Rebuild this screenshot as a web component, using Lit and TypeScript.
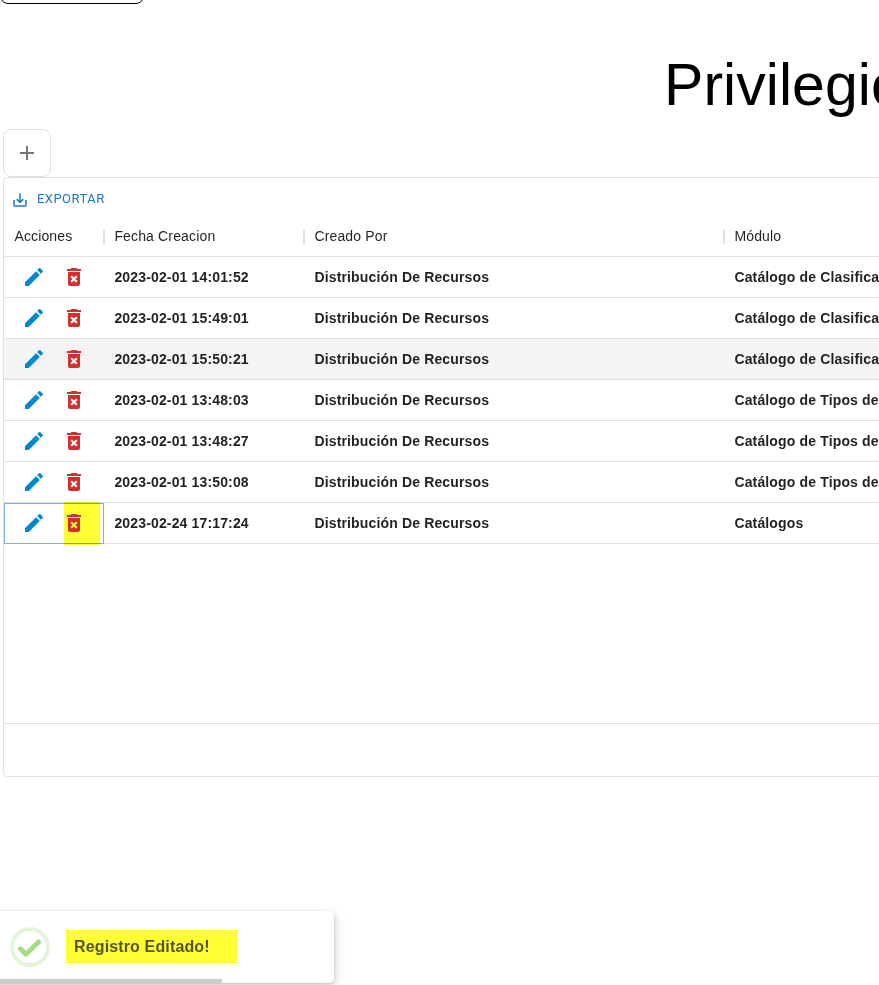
import { LitElement, html, css, svg } from "lit";
import { customElement } from "lit/decorators.js";
import { classMap } from "lit/directives/class-map.js";

const icon = (name: string, d: string) => html`
  <svg class="icon ${name}" viewBox="0 0 24 24">${svg`<path d=${d}></path>`}</svg>
`;

const ADD = "M19 13h-6v6h-2v-6H5v-2h6V5h2v6h6v2z";
const SAVE =
  "M19 12v7H5v-7H3v7c0 1.1.9 2 2 2h14c1.1 0 2-.9 2-2v-7h-2zm-6 .67l2.59-2.58L17 11.5l-5 5-5-5 1.41-1.41L11 12.67V3h2z";
const EDIT =
  "M3 17.25V21h3.75L17.81 9.94l-3.75-3.75L3 17.25zM20.71 7.04c.39-.39.39-1.02 0-1.41l-2.34-2.34a.9959.9959 0 0 0-1.41 0l-1.83 1.83 3.75 3.75 1.83-1.83z";
const DELETE =
  "M6 19c0 1.1.9 2 2 2h8c1.1 0 2-.9 2-2V7H6v12zm2.46-7.12l1.41-1.41L12 12.59l2.12-2.12 1.41 1.41L13.41 14l2.12 2.12-1.41 1.41L12 15.41l-2.12 2.12-1.41-1.41L10.59 14l-2.13-2.12zM15.5 4l-1-1h-5l-1 1H5v2h14V4z";

const ROWS = [
  ["2023-02-01 14:01:52", "Catálogo de Clasificación"],
  ["2023-02-01 15:49:01", "Catálogo de Clasificación"],
  ["2023-02-01 15:50:21", "Catálogo de Clasificación"],
  ["2023-02-01 13:48:03", "Catálogo de Tipos de"],
  ["2023-02-01 13:48:27", "Catálogo de Tipos de"],
  ["2023-02-01 13:50:08", "Catálogo de Tipos de"],
  ["2023-02-24 17:17:24", "Catálogos"],
];
const HOVERED = 2;
const FOCUSED = 6;

@customElement("app-root")
export class AppRoot extends LitElement {
  static styles = css`
    :host {
      display: flow-root;
      position: relative;
      width: 100%;
      height: 985px;
      overflow: hidden;
      background: #fff;
      font-family: "Liberation Sans", Arial, sans-serif;
      color: rgba(0, 0, 0, 0.87);
    }
    * { box-sizing: border-box; }
    .icon { display: block; width: 24px; height: 24px; fill: currentColor; flex: none; }
    .top-box {
      width: 144px;
      height: 40px;
      margin: -36px 0 0 0;
      border: 1px solid #000;
      border-radius: 8px;
    }
    .title {
      margin: 0;
      height: 125px;
      padding: 45px 0 0 664px;
      font-size: 59px;
      line-height: 72px;
      font-weight: 400;
      letter-spacing: 0.05px;
      color: #000;
      white-space: nowrap;
    }
    .add {
      display: flex;
      align-items: center;
      justify-content: center;
      width: 48px;
      height: 48px;
      margin: 0 0 0 3px;
      padding: 0;
      background: #fff;
      border: 1px solid #e0e0e0;
      border-radius: 8px;
      color: rgba(0, 0, 0, 0.54);
    }
    .grid {
      display: flex;
      flex-direction: column;
      width: 1400px;
      height: 600px;
      margin-left: 3px;
      border: 1px solid #e0e0e0;
      border-radius: 4px;
      font-size: 14px;
      letter-spacing: 0.15px;
    }
    .toolbar { height: 38px; padding: 4px 4px 0; }
    .export {
      display: flex;
      align-items: center;
      gap: 8px;
      height: 34px;
      padding: 0 3px 0;
      border: 0;
      background: none;
      font: 400 13px/22px Roboto, "Liberation Sans", sans-serif;
      letter-spacing: 0.46px;
      color: #1976d2;
    }
    .save { width: 18px; height: 18px; margin-top: 2px; }
    .row {
      display: grid;
      grid-template-columns: 100px 200px 420px 1fr;
      grid-template-rows: 40px;
      height: 41px;
      border-bottom: 1px solid #e0e0e0;
      font-weight: 700;
      white-space: nowrap;
    }
    .row.hovered { background: #f4f4f4; }
    .row.header { font-weight: 400; }
    .cell { display: flex; align-items: center; padding-left: 10.4px; min-width: 0; }
    .header .cell { justify-content: space-between; }
    .sep { width: 2px; height: 14px; margin: 1px -1px 0 0; background: #e0e0e0; z-index: 1; }
    .actions { position: relative; gap: 16px; padding-left: 18px; }
    .actions.focused { height: 41px; padding-bottom: 1px; box-shadow: inset 0 0 0 1px #7fb1e4; }
    .edit { color: #0288d1; }
    .delete { color: #d32f2f; }
    .mark { position: absolute; background: #ff3; mix-blend-mode: darken; }
    .actions .mark { left: 60px; top: -1px; width: 36px; height: 43px; }
    .body { flex: 1; }
    .footer { height: 53px; border-top: 1px solid #e0e0e0; }
    .toast {
      position: absolute;
      left: -26px;
      bottom: 2px;
      display: flex;
      align-items: center;
      width: 360px;
      height: 72px;
      padding-left: 36px;
      overflow: hidden;
      border-radius: 5px;
      background: #fff;
    }
    .toast-shadow {
      position: absolute;
      left: -26px;
      bottom: 2px;
      width: 360px;
      height: 72px;
      border-radius: 5px;
      box-shadow: 0 0 1px rgba(0, 0, 0, 0.075), 0 1px 2px rgba(0, 0, 0, 0.075),
        1px 2px 4px rgba(0, 0, 0, 0.075), 1px 3px 8px rgba(0, 0, 0, 0.075),
        2px 4px 16px rgba(0, 0, 0, 0.075);
    }
    .check { display: block; width: 40px; height: 40px; flex: none; fill: none; stroke: #a5dc86; }
    .message {
      position: relative;
      margin-left: 24px;
      font-size: 16px;
      font-weight: 700;
      line-height: 18px;
      letter-spacing: 0.14px;
      color: #545454;
    }
    .message .mark { left: -8px; top: -8px; width: 171px; height: 33px; }
    .progress { position: absolute; left: 0; bottom: 0; width: 248px; height: 4px; background: #ccc; }
  `;

  private row([date, module]: string[], i: number) {
    const focused = i === FOCUSED;
    return html`
      <div class=${classMap({ row: true, hovered: i === HOVERED })}>
        <div class=${classMap({ cell: true, actions: true, focused })}>
          ${icon("edit", EDIT)} ${icon("delete", DELETE)}
          ${focused ? html`<span class="mark"></span>` : ""}
        </div>
        <div class="cell">${date}</div>
        <div class="cell">Distribución De Recursos</div>
        <div class="cell">${module}</div>
      </div>
    `;
  }

  render() {
    return html`
      <div class="top-box"></div>
      <h2 class="title">Privilegios</h2>
      <button class="add" aria-label="Agregar">${icon("plus", ADD)}</button>
      <div class="grid">
        <div class="toolbar">
          <button class="export">${icon("save", SAVE)}<span>EXPORTAR</span></button>
        </div>
        <div class="row header">
          ${["Acciones", "Fecha Creacion", "Creado Por"].map(
            (name) => html`<div class="cell">${name}<span class="sep"></span></div>`
          )}
          <div class="cell">Módulo</div>
        </div>
        <div class="body">${ROWS.map((r, i) => this.row(r, i))}</div>
        <div class="footer"></div>
      </div>
      <div class="toast-shadow"></div>
      <div class="toast">
        <svg class="check" viewBox="0 0 40 40">
          <circle cx="20" cy="20" r="18" stroke-width="4" stroke-opacity="0.3"></circle>
          <path d="M10.4 21.8l5.5 5.4L28.6 15" stroke-width="5" stroke-linecap="round" stroke-linejoin="round"></path>
        </svg>
        <div class="message">Registro Editado!<span class="mark"></span></div>
        <div class="progress"></div>
      </div>
    `;
  }
}
